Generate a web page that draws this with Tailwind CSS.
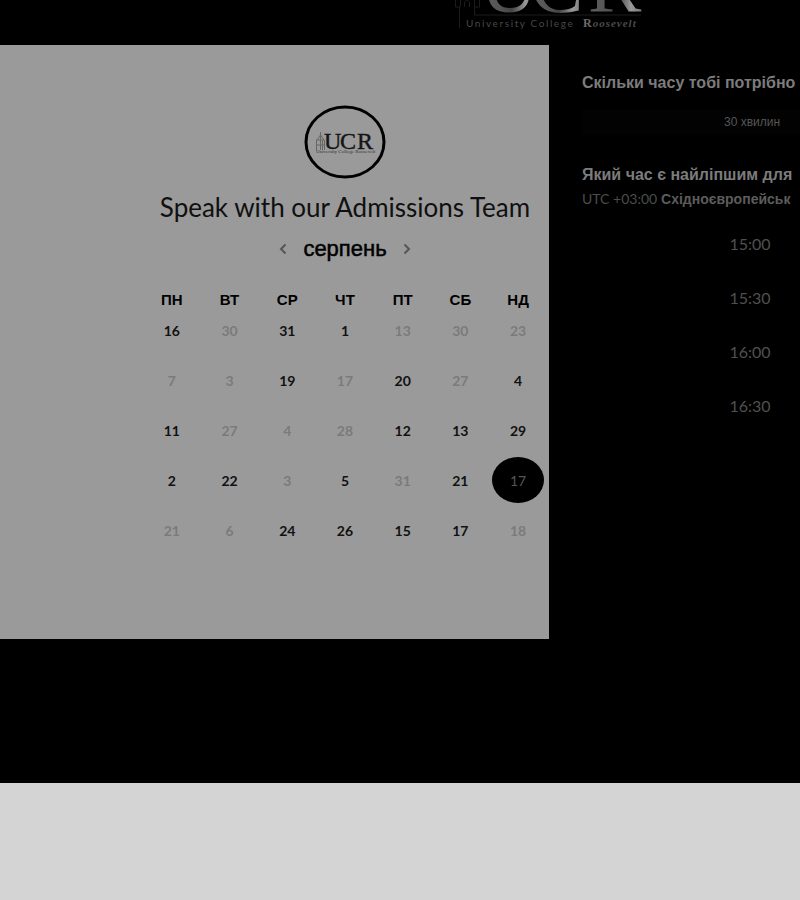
<!DOCTYPE html>
<html lang="uk">
<head>
<meta charset="utf-8">
<meta name="viewport" content="width=device-width, initial-scale=1">
<title>Speak with our Admissions Team</title>
<script src="https://cdn.jsdelivr.net/npm/@tailwindcss/browser@4"></script>
</head>
<body class="bg-[#d4d4d4] overflow-x-hidden font-['Liberation_Sans',sans-serif]">
<div class="bg-black pb-36 overflow-hidden">
  <header class="flex h-[45px] justify-center pl-[298px]">
    <svg class="h-[45px] w-[200px] shrink-0" viewBox="448 0 200 45" role="img" aria-label="University College Roosevelt">
      <defs>
        <linearGradient id="g" x1="0" x2="1"><stop offset="0" stop-color="#606060"/><stop offset=".35" stop-color="#555"/><stop offset=".55" stop-color="#444"/><stop offset=".8" stop-color="#9a9a9a"/><stop offset="1" stop-color="#777"/></linearGradient>
      </defs>
      <g fill="none" stroke="#1c1c1c"><path d="M454.500 0V7H458.500V28M459.500 0V7M463.500 7V2Q467 -2 468.500 3V7M473.500 0V15H640M478.500 0V7H473.500"/></g>
      <g font-family="Liberation Serif" font-size="80" fill="url(#g)"><text x="479" y="12">U</text><text x="529" y="12">C</text><text x="587" y="12">R</text></g>
      <text x="465" y="27" font-family="Lato" font-size="10" fill="#484848" letter-spacing="1.600">University College</text>
      <text x="582" y="27" font-family="Liberation Serif" font-size="12" font-weight="bold" letter-spacing="1" fill="#6c6c6c">R<tspan font-style="italic" font-size="11" fill="#4c4c4c">oosevelt</tspan></text>
    </svg>
  </header>
  <div class="flex">
    <main class="flex min-h-[594px] min-w-[549px] flex-1 flex-col items-end bg-[#9a9a9a] pr-[2px] pt-[60px]">
      <div class="flex w-[404px] flex-col items-center">
        <svg class="h-[74px] w-[82px]" viewBox="0 0 82 74" role="img" aria-label="UCR">
          <ellipse cx="41" cy="37" rx="39" ry="35" fill="none" stroke="#000" stroke-width="3"/>
          <g fill="none" stroke="#666"><path d="M12.500 45V35H20.500V45M16.500 27V45M13 35L16.500 30L20 35M12 40H21M18.500 35V45"/></g>
          <g font-family="Liberation Serif" font-size="24" fill="#151515" stroke="#151515" stroke-width=".4"><text x="20" y="44">U</text><text x="36" y="44">C</text><text x="53" y="44">R</text></g>
          <text x="12" y="48" font-family="Liberation Serif" font-size="5" fill="#333">University College Roosevelt</text>
        </svg>
        <h1 class="mt-3 whitespace-nowrap font-['Lato',sans-serif] text-[26px] leading-8 text-[#101010]">Speak with our Admissions Team</h1>
        <div class="mt-3 flex items-center gap-2 leading-7">
          <button type="button" aria-label="Попередній місяць" class="flex h-6 w-6 items-center justify-center"><svg class="h-3 w-3" viewBox="0 0 12 12" fill="none" stroke="#555" stroke-width="2"><path d="M8.500 1.500L4 6l4.500 4.500"/></svg></button>
          <h2 class="text-[22px] text-black [-webkit-text-stroke:0.5px_#000]">серпень</h2>
          <button type="button" aria-label="Наступний місяць" class="flex h-6 w-6 items-center justify-center"><svg class="h-3 w-3" viewBox="0 0 12 12" fill="none" stroke="#555" stroke-width="2"><path d="M3.500 1.500L8 6l-4.500 4.500"/></svg></button>
        </div>
        <table class="mt-[30px] w-full table-fixed border-collapse text-center">
          <thead><tr class="text-[15px] leading-[14px] text-black"><th class="p-0">ПН</th><th class="p-0">ВТ</th><th class="p-0">СР</th><th class="p-0">ЧТ</th><th class="p-0">ПТ</th><th class="p-0">СБ</th><th class="p-0">НД</th></tr></thead>
          <tbody id="days" class="font-['Lato',sans-serif] text-[14px] font-bold"></tbody>
        </table>
      </div>
    </main>
    <aside class="ml-[33px] w-[218px] shrink-0">
      <div class="w-[336px] whitespace-nowrap">
        <h3 class="pt-7 text-[16px] font-bold leading-5 text-[#7c7c7c]">Скільки часу тобі потрібно</h3>
        <button type="button" class="mt-4 block h-[26px] w-full bg-[#020202] pl-1 text-[12px] text-[#565656]">30 хвилин</button>
        <h3 class="mt-[30px] text-[16px] font-bold leading-5 text-[#7c7c7c]">Який час є найліпшим для</h3>
        <p class="mt-1 text-[14px] leading-5 text-[#4c4c4c]"><span class="font-['Lato',sans-serif]">UTC +03:00</span> <b class="text-[#5c5c5c]">Східноєвропейськ</b></p>
        <div class="mt-2 flex flex-col font-['Lato',sans-serif] text-[16px] text-[#505050]">
          <button type="button" class="h-[54px]">15:00</button>
          <button type="button" class="h-[54px]">15:30</button>
          <button type="button" class="h-[54px]">16:00</button>
          <button type="button" class="h-[54px]">16:30</button>
        </div>
      </div>
    </aside>
  </div>
</div>
<script>
// A leading minus marks a day that cannot be booked.
const weeks = [[16,-30,31,1,-13,-30,-23],[-7,-3,19,-17,20,-27,4],[11,-27,-4,-28,12,13,29],[2,22,-3,5,-31,21,17],[-21,-6,24,26,15,17,-18]];
document.getElementById('days').innerHTML = weeks.map((w, r) => '<tr>' + w.map((d, c) => {
  const selected = r === 3 && c === 6;
  const look = selected ? 'bg-black text-[#555] font-normal' : d < 0 ? 'text-[#7b7b7b]' : 'text-[#111]';
  return `<td class="p-0 pb-1"><button type="button" ${d < 0 ? 'disabled' : ''} class="mx-auto block h-[46px] w-[52px] rounded-[50%] ${look}">${Math.abs(d)}</button></td>`;
}).join('') + '</tr>').join('');
</script>
</body>
</html>
